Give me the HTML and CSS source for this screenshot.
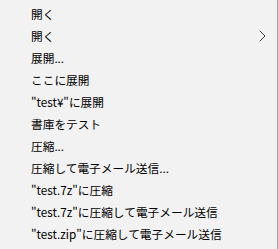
FILE: index.html
```html
<!DOCTYPE html>
<html lang="ja">
<head>
<meta charset="utf-8">
<link rel="stylesheet" href="styles.css">
</head>
<body>
<div class="menu">
  <div class="item">開く</div>
  <div class="item has-sub">開く<svg class="chev" width="7" height="12" viewBox="0 0 7 12"><path d="M0.8 0.8 L6 6 L0.8 11.2" fill="none" stroke="#3c3c3c" stroke-width="1"/></svg></div>
  <div class="item">展開...</div>
  <div class="item">ここに展開</div>
  <div class="item">"test¥"に展開</div>
  <div class="item">書庫をテスト</div>
  <div class="item">圧縮...</div>
  <div class="item">圧縮して電子メール送信...</div>
  <div class="item">"test.7z"に圧縮</div>
  <div class="item">"test.7z"に圧縮して電子メール送信</div>
  <div class="item">"test.zip"に圧縮して電子メール送信</div>
</div>
</body>
</html>
```

FILE: styles.css
```css
html, body {
  margin: 0;
  padding: 0;
  background: #f2f2f2;
}
.menu {
  box-sizing: border-box;
  width: 278px;
  height: 249px;
  background: #f2f2f2;
  border-right: 1px solid #a0a0a0;
  padding-top: 3px;
  font-family: "Noto Sans CJK JP", "Noto Sans", sans-serif;
  font-size: 11.7px;
  color: #000;
  overflow: hidden;
}
.item {
  height: 22px;
  line-height: 22px;
  padding-left: 31px;
  display: flex;
  align-items: center;
  white-space: nowrap;
}
.chev {
  margin-left: auto;
  margin-right: 11px;
}
```
